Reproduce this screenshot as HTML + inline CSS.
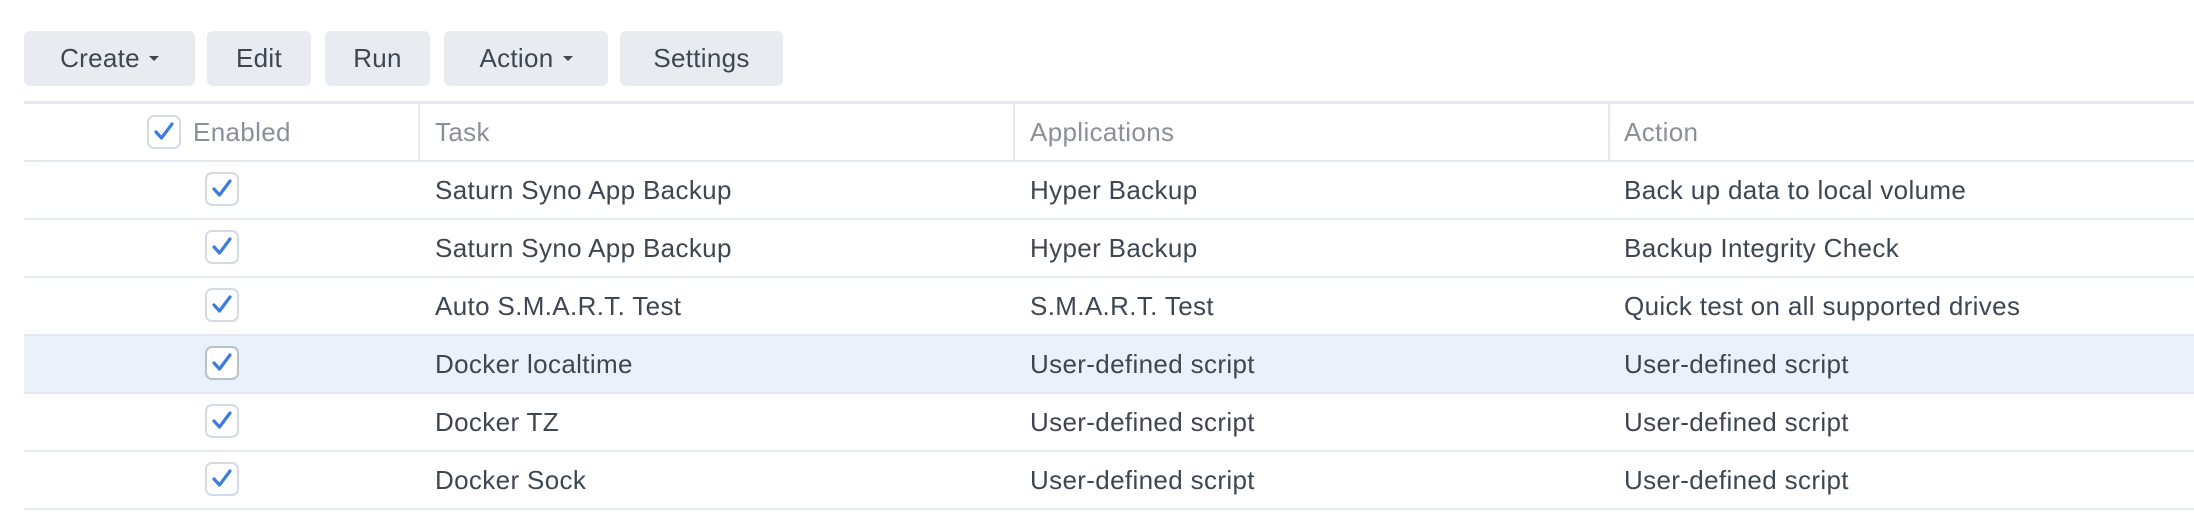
<!DOCTYPE html>
<html><head><style>
body{margin:0;width:2194px;height:532px;background:#fff;font-family:"Liberation Sans",sans-serif;position:relative;overflow:hidden;color:#3e4651}
.btn{position:absolute;top:31px;height:55px;background:#e8ecf0;border-radius:6px;font-size:26px;line-height:55px;text-align:center;color:#3e4651;letter-spacing:0.3px}
.car{display:inline-block;width:0;height:0;border-left:5px solid transparent;border-right:5px solid transparent;border-top:5px solid #3e4651;vertical-align:middle;margin-left:9px;margin-top:-3px}
.hl{position:absolute;left:24px;right:0;height:2px;background:#e4e9ef}
.vl{position:absolute;top:103px;height:58px;width:2px;background:#e4e9ef}
.t{position:absolute;font-size:26px;line-height:30px;white-space:nowrap;letter-spacing:0.35px}
.cb{position:absolute;width:34px;height:34px;border:2px solid #d3dbe4;border-radius:7px;background:#fff;box-sizing:border-box}
.cb svg{position:absolute;left:4px;top:4px}
</style></head><body>
<div class="btn" style="left:24px;width:171px">Create<span class="car"></span></div>
<div class="btn" style="left:207px;width:104px">Edit</div>
<div class="btn" style="left:325px;width:105px">Run</div>
<div class="btn" style="left:444px;width:164px">Action<span class="car"></span></div>
<div class="btn" style="left:620px;width:163px">Settings</div>

<div class="hl" style="top:101px;height:3px"></div>
<div class="vl" style="left:418px"></div>
<div class="vl" style="left:1013px"></div>
<div class="vl" style="left:1608px"></div>
<div style="position:absolute;left:24px;right:0;top:336px;height:57px;background:#eaf1fa"></div>
<div class="hl" style="top:160px"></div>
<div class="hl" style="top:218px"></div>
<div class="hl" style="top:276px"></div>
<div class="hl" style="top:334px"></div>
<div class="hl" style="top:392px"></div>
<div class="hl" style="top:450px"></div>
<div class="hl" style="top:508px"></div>

<div class="cb" style="left:147px;top:115px"><svg width="22" height="22" viewBox="0 0 22 22"><path d="M3 11 L8.5 17 L19 3" fill="none" stroke="#3a7ce0" stroke-width="3.2" stroke-linecap="round" stroke-linejoin="round"/></svg></div>
<div class="t" style="left:193px;top:117px;color:#8a9099">Enabled</div>
<div class="t" style="left:435px;top:117px;color:#8a9099">Task</div>
<div class="t" style="left:1030px;top:117px;color:#8a9099">Applications</div>
<div class="t" style="left:1624px;top:117px;color:#8a9099">Action</div>

<div class="cb" style="left:205px;top:172px"><svg width="22" height="22" viewBox="0 0 22 22"><path d="M3 11 L8.5 17 L19 3" fill="none" stroke="#3a7ce0" stroke-width="3.2" stroke-linecap="round" stroke-linejoin="round"/></svg></div>
<div class="t" style="left:435px;top:175px">Saturn Syno App Backup</div>
<div class="t" style="left:1030px;top:175px">Hyper Backup</div>
<div class="t" style="left:1624px;top:175px">Back up data to local volume</div>

<div class="cb" style="left:205px;top:230px"><svg width="22" height="22" viewBox="0 0 22 22"><path d="M3 11 L8.5 17 L19 3" fill="none" stroke="#3a7ce0" stroke-width="3.2" stroke-linecap="round" stroke-linejoin="round"/></svg></div>
<div class="t" style="left:435px;top:233px">Saturn Syno App Backup</div>
<div class="t" style="left:1030px;top:233px">Hyper Backup</div>
<div class="t" style="left:1624px;top:233px">Backup Integrity Check</div>

<div class="cb" style="left:205px;top:288px"><svg width="22" height="22" viewBox="0 0 22 22"><path d="M3 11 L8.5 17 L19 3" fill="none" stroke="#3a7ce0" stroke-width="3.2" stroke-linecap="round" stroke-linejoin="round"/></svg></div>
<div class="t" style="left:435px;top:291px">Auto S.M.A.R.T. Test</div>
<div class="t" style="left:1030px;top:291px">S.M.A.R.T. Test</div>
<div class="t" style="left:1624px;top:291px">Quick test on all supported drives</div>

<div class="cb" style="left:205px;top:346px;border-color:#b9c1cb"><svg width="22" height="22" viewBox="0 0 22 22"><path d="M3 11 L8.5 17 L19 3" fill="none" stroke="#3a7ce0" stroke-width="3.2" stroke-linecap="round" stroke-linejoin="round"/></svg></div>
<div class="t" style="left:435px;top:349px">Docker localtime</div>
<div class="t" style="left:1030px;top:349px">User-defined script</div>
<div class="t" style="left:1624px;top:349px">User-defined script</div>

<div class="cb" style="left:205px;top:404px"><svg width="22" height="22" viewBox="0 0 22 22"><path d="M3 11 L8.5 17 L19 3" fill="none" stroke="#3a7ce0" stroke-width="3.2" stroke-linecap="round" stroke-linejoin="round"/></svg></div>
<div class="t" style="left:435px;top:407px">Docker TZ</div>
<div class="t" style="left:1030px;top:407px">User-defined script</div>
<div class="t" style="left:1624px;top:407px">User-defined script</div>

<div class="cb" style="left:205px;top:462px"><svg width="22" height="22" viewBox="0 0 22 22"><path d="M3 11 L8.5 17 L19 3" fill="none" stroke="#3a7ce0" stroke-width="3.2" stroke-linecap="round" stroke-linejoin="round"/></svg></div>
<div class="t" style="left:435px;top:465px">Docker Sock</div>
<div class="t" style="left:1030px;top:465px">User-defined script</div>
<div class="t" style="left:1624px;top:465px">User-defined script</div>
</body></html>
